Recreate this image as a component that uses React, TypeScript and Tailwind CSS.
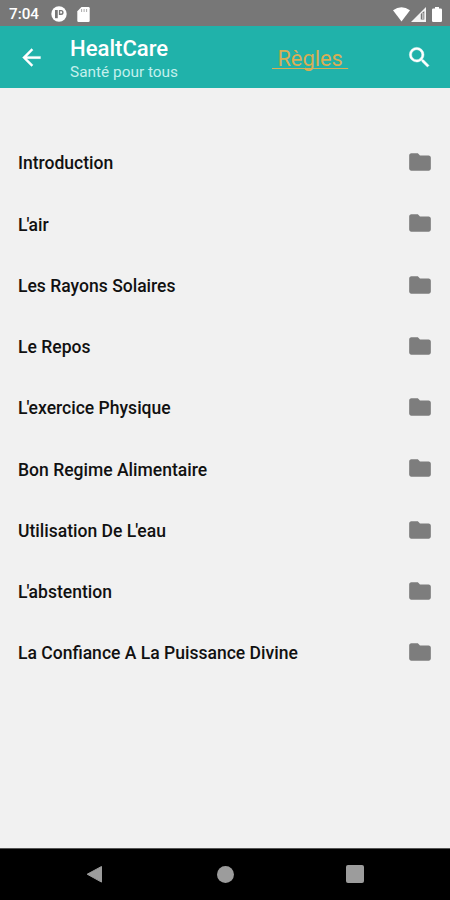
const topics = [
  "Introduction",
  "L'air",
  "Les Rayons Solaires",
  "Le Repos",
  "L'exercice Physique",
  "Bon Regime Alimentaire",
  "Utilisation De L'eau",
  "L'abstention",
  "La Confiance A La Puissance Divine",
];

function StatusBar() {
  return (
    <div className="flex h-[26px] shrink-0 items-center bg-[#777777] pl-[9px] pr-[8px] pt-[2px] text-white">
      <span className="w-[42px] pt-px text-[15.200px] font-medium leading-none">7:04</span>
      <svg className="h-4 w-4" viewBox="0 0 16 16">
        <circle cx="8" cy="8" r="7.7" fill="#fff" />
        <path d="M4 4h3v8.200H4z" fill="#777" />
        <path d="M8.500 4.600h1.600a1.800 1.800 0 0 1 0 3.600H8.500z" fill="#fff" stroke="#777" strokeWidth="1.400" />
        <path d="M7.200 3v10" stroke="#fff" strokeWidth=".8" />
      </svg>
      <svg className="ml-[10px] h-[15px] w-[13px]" viewBox="0 0 13 15">
        <path d="M4.5 0H11.5Q12.7 0 12.7 1.3V13.7Q12.7 15 11.4 15H1.5Q.3 15 .3 13.7V4.3Z" fill="#fff" />
        <path d="M4.6 2v3M7.1 2v3M9.6 2v3" stroke="#aaa" strokeWidth="1" />
      </svg>
      <svg className="ml-auto h-[15px] w-[17px]" viewBox="0 0 17 15">
        <path d="M0 3.3Q8.5-3 17 3.3L8.5 14.5Z" fill="#fff" />
      </svg>
      <svg className="ml-[1px] h-[15px] w-[15px]" viewBox="0 0 15 15">
        <path d="M0 15 15 0V15Z" fill="#f5f5f5" />
        <path d="M9.800 7 13.300 4V12.500H9.800Z" fill="#777" />
        <path d="M11.900 6v6" stroke="#eee" strokeWidth="1" />
      </svg>
      <svg className="ml-[6px] h-[15px] w-[10px]" viewBox="0 0 10 15">
        <path d="M3 0h4v1.5h1.7Q10 1.5 10 2.8v11Q10 15 8.7 15H1.3Q0 15 0 13.8v-11Q0 1.5 1.3 1.5H3Z" fill="#fff" />
      </svg>
    </div>
  );
}

function AppBar() {
  return (
    <header className="flex h-[62px] shrink-0 items-center bg-[#20b2aa]">
      <svg className="ml-[18px] h-[27px] w-[27px]" viewBox="0 0 24 24" fill="#fff" stroke="#fff" strokeWidth=".3">
        <path d="M20 11H7.83l5.59-5.59L12 4l-8 8 8 8 1.41-1.41L7.83 13H20v-2z" />
      </svg>
      <div className="ml-[25px] w-[202px] pt-[5px]">
        <h1 className="text-[22.1px] font-medium leading-[26px] text-white">HealtCare</h1>
        <p className="text-[15.400px] leading-[23px] text-[#c4f0ed]">Santé pour tous</p>
      </div>
      <span className="whitespace-pre pt-[2px] text-[21.800px] leading-[25px] text-[#d9ae55] underline decoration-[1px] underline-offset-[2px] [text-decoration-skip-ink:none]">{" Règles "}</span>
      <svg className="ml-auto mr-[17px] h-[27px] w-[27px]" viewBox="0 0 24 24" fill="#fff" stroke="#fff" strokeWidth=".4">
        <path d="M15.5 14h-.79l-.28-.27A6.47 6.47 0 0 0 16 9.5 6.5 6.5 0 1 0 9.5 16c1.61 0 3.09-.59 4.23-1.57l.27.28v.79l5 4.99L20.49 19l-4.99-5zm-6 0C7.01 14 5 11.99 5 9.5S7.01 5 9.5 5 14 7.01 14 9.5 11.99 14 9.5 14z" />
      </svg>
    </header>
  );
}

/** Tightens the pair "L'" so that the apostrophe sits over the foot of the letter. */
function TopicTitle({ title }: { title: string }) {
  const [before, after] = title.split("L'");
  if (after === undefined) return <>{title}</>;
  return (
    <>
      {before}
      <span className="tracking-[-0.9px]">L'</span>
      {after}
    </>
  );
}

function TopicRow({ title }: { title: string }) {
  return (
    <li className="flex h-[61.25px] items-center justify-between pl-[18px] pr-[17px]">
      <span className="pt-[1.5px] text-[17.55px] font-medium leading-6 text-[#111111]">
        <TopicTitle title={title} />
      </span>
      <svg className="mb-px h-[26px] w-[26px]" viewBox="0 0 24 24" fill="#7d7d7d">
        <path d="M10 4H4c-1.1 0-1.99.9-1.99 2L2 18c0 1.100.9 2 2 2h16c1.1 0 2-.9 2-2V8c0-1.100-.9-2-2-2h-8l-2-2z" />
      </svg>
    </li>
  );
}

function NavigationBar() {
  return (
    <nav className="flex h-[52px] shrink-0 items-center justify-between border-t border-[#555] bg-black pl-[86px] pr-[86px]">
      <svg className="h-[18px] w-[18px]" viewBox="0 0 18 18">
        <path d="M1.200 8.200 15.500 .5V16.100Z" fill="#9c9c9c" stroke="#9c9c9c" strokeLinejoin="round" />
      </svg>
      <span className="h-[17px] w-[17px] rounded-full bg-[#9c9c9c]" />
      <span className="mb-px h-[18px] w-[18px] rounded-[2px] bg-[#9c9c9c]" />
    </nav>
  );
}

export default function App() {
  return (
    <div className="flex h-[900px] w-[450px] flex-col overflow-hidden bg-[#f1f1f1] font-['Roboto',sans-serif]">
      <StatusBar />
      <AppBar />
      <main className="grow pt-[44px]">
        <ul>
          {topics.map((title) => (
            <TopicRow key={title} title={title} />
          ))}
        </ul>
      </main>
      <NavigationBar />
    </div>
  );
}
